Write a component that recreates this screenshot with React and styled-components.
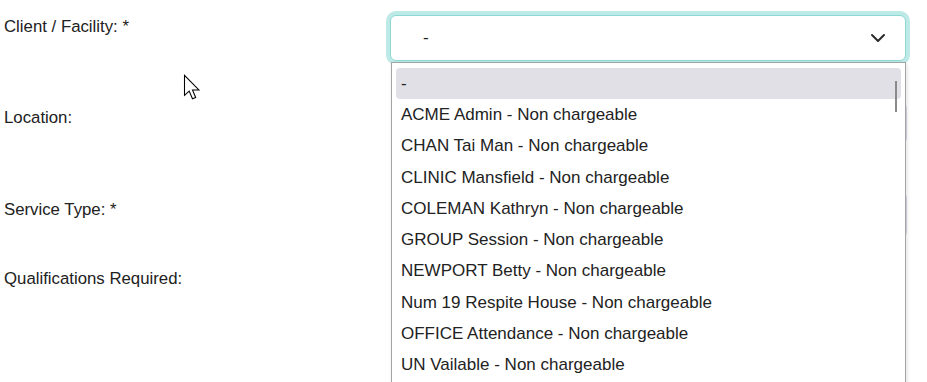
import React from 'react';
import styled, { createGlobalStyle } from 'styled-components';

const options = [
  '-',
  'ACME Admin - Non chargeable',
  'CHAN Tai Man - Non chargeable',
  'CLINIC Mansfield - Non chargeable',
  'COLEMAN Kathryn - Non chargeable',
  'GROUP Session - Non chargeable',
  'NEWPORT Betty - Non chargeable',
  'Num 19 Respite House - Non chargeable',
  'OFFICE Attendance - Non chargeable',
  'UN Vailable - Non chargeable'
];

const GlobalStyle = createGlobalStyle`
  html, body {
    margin: 0;
    padding: 0;
    background: #ffffff;
    overflow: hidden;
  }
  body {
    font-family: 'Liberation Sans', Arial, sans-serif;
    color: #212121;
  }
`;

const Page = styled.div`
  position: relative;
  width: 927px;
  height: 382px;
  overflow: hidden;
`;

const Form = styled.div`
  padding-top: 1px;
  display: flex;
  flex-direction: column;
`;

const Row = styled.div`
  display: grid;
  grid-template-columns: 386px 1fr;
  height: ${p => p.h}px;
  position: relative;
`;

const Label = styled.label`
  padding: 16px 0 0 4px;
  font-size: 16.8px;
  line-height: 19px;
`;

const Field = styled.div`
  position: relative;
  padding: ${p => p.top}px 0 0 ${p => p.left || 4}px;
`;

const SelectBox = styled.div`
  box-sizing: border-box;
  width: 516px;
  height: 46px;
  border: 1px solid #8cd8d4;
  border-radius: 6px;
  box-shadow: 0 0 0 4px #bde9e7;
  background: #fff;
  display: flex;
  align-items: center;
  justify-content: space-between;
  padding: 0 19px 0 32px;
  font-size: 17px;
  position: relative;
  z-index: 1;
`;

const Input = styled.div`
  box-sizing: border-box;
  width: 515px;
  height: ${p => p.h}px;
  border: 1px solid #d6d8e8;
  border-radius: 6px;
  background: #fff;
`;

const Menu = styled.ul`
  position: absolute;
  top: 62px;
  left: 391px;
  width: 515px;
  box-sizing: border-box;
  margin: 0;
  padding: 5px 4px 40px;
  list-style: none;
  background: #fff;
  border: 1px solid #a4a4a4;
  box-shadow: 1px 2px 4px rgba(0, 0, 0, 0.12);
  z-index: 2;
`;

const Option = styled.li`
  height: 31.3px;
  display: flex;
  align-items: center;
  padding-left: 5px;
  font-size: 17px;
  color: #222;
  border-radius: 4px;
  background: ${p => (p.active ? '#e1e0e6' : 'transparent')};
`;

const Thumb = styled.div`
  position: absolute;
  top: 18px;
  right: 8px;
  width: 2px;
  height: 31px;
  background: #8a8a8a;
`;

const Cursor = styled.svg`
  position: absolute;
  left: 183px;
  top: 74px;
  z-index: 3;
`;

const Chevron = () => (
  <svg width="16" height="10" viewBox="0 0 16 10">
    <polyline points="2,2 8,8 14,2" fill="none" stroke="#2b2b2b" strokeWidth="2" strokeLinecap="round" strokeLinejoin="round" />
  </svg>
);

export default function App() {
  return (
    <Page>
      <GlobalStyle />
      <Form>
        <Row h={91}>
          <Label>Client / Facility: *</Label>
          <Field top={14}>
            <SelectBox>
              <span>-</span>
              <Chevron />
            </SelectBox>
          </Field>
        </Row>
        <Row h={92}>
          <Label>Location:</Label>
          <Field top={10} left={6}>
            <Input h={42} />
          </Field>
        </Row>
        <Row h={69}>
          <Label>Service Type: *</Label>
          <Field top={8} left={6}>
            <Input h={46} />
          </Field>
        </Row>
        <Row h={129}>
          <Label>Qualifications Required:</Label>
          <Field top={0} />
        </Row>
      </Form>
      <Menu>
        {options.map((o, i) => (
          <Option key={o} active={i === 0}>{o}</Option>
        ))}
        <Thumb />
      </Menu>
      <Cursor width="19" height="28" viewBox="0 0 14 21">
        <path d="M1 1 V16 L4.5 12.8 L7 18.6 L9.4 17.6 L7 12 H11.8 Z" fill="#fff" stroke="#000" strokeWidth="0.8" strokeLinejoin="miter" />
      </Cursor>
    </Page>
  );
}
